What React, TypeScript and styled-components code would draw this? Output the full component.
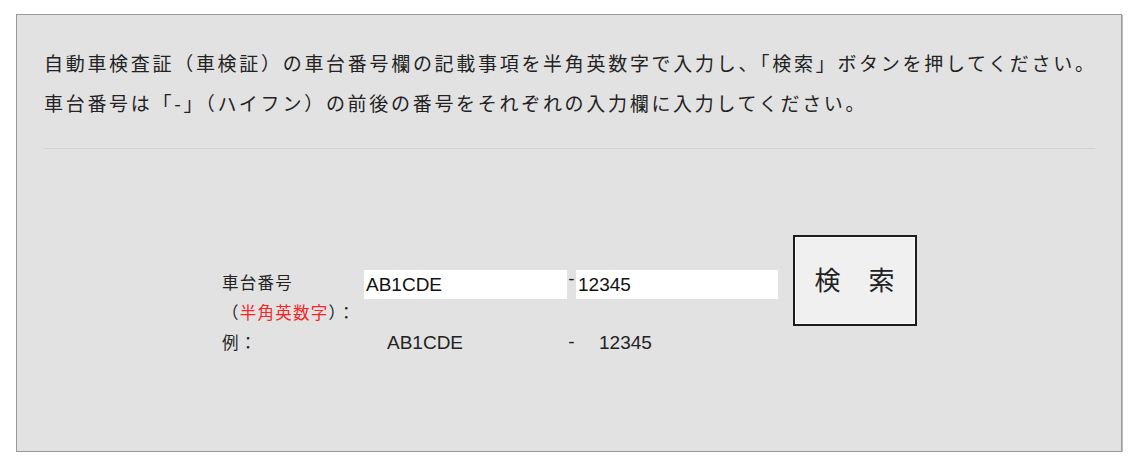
import React from "react";
import styled, { createGlobalStyle } from "styled-components";

const GlobalStyle = createGlobalStyle`
  html, body { margin: 0; padding: 0; background: #ffffff; }
  body { font-family: "Noto Sans CJK JP", "Noto Sans", sans-serif; color: #222; }
  * { box-sizing: border-box; }
`;

const Page = styled.div`
  padding: 14px 0 0 16px;
  width: 1136px;
`;

const Panel = styled.section`
  width: 1106px;
  height: 438px;
  background: #e2e2e2;
  border: 1px solid #9a9a9a;
  box-shadow: 1px 1px 0 #bdbdbd;
  padding: 28px 26px 0 27px;
  display: flex;
  flex-direction: column;
`;

const Intro = styled.p`
  margin: 0;
  font-size: 19px;
  line-height: 40px;
  letter-spacing: 2.7px;
  color: #222;
  white-space: nowrap;
`;

const Divider = styled.hr`
  margin: 25px 0 0;
  border: 0;
  height: 1px;
  background: #d2d2d2;
`;

const FormArea = styled.div`
  display: flex;
  justify-content: center;
  align-items: flex-start;
  gap: 15px;
  padding-top: 86px;
`;

const Grid = styled.div`
  margin-top: 32px;
  display: grid;
  grid-template-columns: 142px 203px 9px 202px;
  grid-template-rows: 30px 30px 30px;
`;

const Label = styled.div<{ $row: string }>`
  grid-column: 1;
  grid-row: ${(p) => p.$row};
  font-size: 16.5px;
  letter-spacing: 1.25px;
  line-height: 30px;
  color: #222;
  white-space: nowrap;
`;

const Red = styled.span`
  color: #f52525;
`;

const Input = styled.input<{ $col: number }>`
  grid-column: ${(p) => p.$col};
  grid-row: 1;
  margin-top: 3px;
  width: 100%;
  height: 29px;
  border: 0;
  outline: none;
  background: #ffffff;
  padding: 0 0 0 2px;
  font-family: "Liberation Sans", Arial, sans-serif;
  font-size: 19px;
  color: #111;
`;

const Dash = styled.div<{ $row: number; $small?: boolean }>`
  grid-column: 3;
  grid-row: ${(p) => p.$row};
  text-align: center;
  font-family: "Liberation Sans", Arial, sans-serif;
  font-size: 19px;
  line-height: ${(p) => (p.$small ? "24px" : "30px")};
  color: #222;
`;

const Example = styled.div<{ $col: number }>`
  grid-column: ${(p) => p.$col};
  grid-row: 3;
  padding-left: 23px;
  font-family: "Liberation Sans", Arial, sans-serif;
  font-size: 19px;
  line-height: 31px;
  color: #222;
`;

const SearchButton = styled.button`
  width: 124px;
  height: 91px;
  border: 2px solid #1c1c1c;
  box-shadow: inset 0 0 0 1px #fbfbfb;
  background: #f0f0f0;
  font-family: "Noto Sans CJK JP", sans-serif;
  font-size: 26px;
  letter-spacing: 1px;
  color: #222;
  padding: 0 0 4px;
  cursor: pointer;
`;

export default function App() {
  return (
    <>
      <GlobalStyle />
      <Page>
        <Panel>
          <Intro>
            自動車検査証（車検証）の車台番号欄の記載事項を半角英数字で入力し、「検索」ボタンを押してください。
            <br />
            車台番号は「-」（ハイフン）の前後の番号をそれぞれの入力欄に入力してください。
          </Intro>
          <Divider />
          <FormArea>
            <Grid>
              <Label $row="1 / 3">
                車台番号
                <br />
                （<Red>半角英数字</Red>）：
              </Label>
              <Input $col={2} defaultValue="AB1CDE" />
              <Dash $row={1} $small>
                -
              </Dash>
              <Input $col={4} defaultValue="12345" />
              <Label $row="3">例：</Label>
              <Example $col={2}>AB1CDE</Example>
              <Dash $row={3}>-</Dash>
              <Example $col={4}>12345</Example>
            </Grid>
            <SearchButton type="button">検　索</SearchButton>
          </FormArea>
        </Panel>
      </Page>
    </>
  );
}
